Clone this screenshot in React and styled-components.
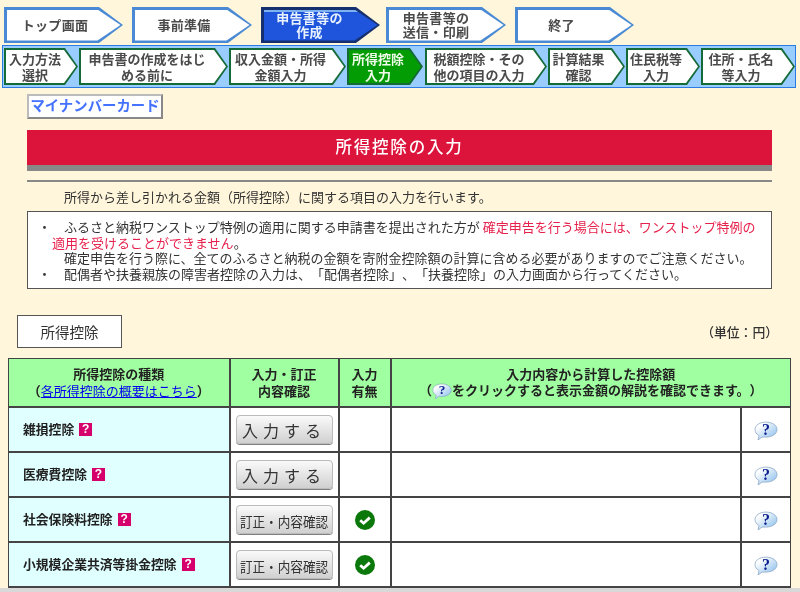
import React from 'react';
import styled, { createGlobalStyle, css } from 'styled-components';

const GlobalStyle = createGlobalStyle`
  html, body { margin: 0; padding: 0; height: 592px; overflow: hidden; background: #fff6db; }
  body {
    font-family: "Noto Sans CJK JP", "Liberation Sans", sans-serif;
    font-size: 13px;
    color: #333;
    text-spacing-trim: space-all;
    font-feature-settings: "palt" 0;
  }
`;

const topSteps = [
  { lines: ['トップ画面'], width: 119, gap: 9, pad: 17 },
  { lines: ['事前準備'], width: 120, gap: 9, pad: 16 },
  { lines: ['申告書等の', '作成'], width: 119, gap: 6, pad: 22, active: true },
  { lines: ['申告書等の', '送信・印刷'], width: 120, gap: 9, pad: 20 },
  { lines: ['終了'], width: 119, gap: 0, pad: 26 },
];

const subSteps = [
  { lines: ['入力方法', '選択'], width: 74, gap: 1, pad: 12 },
  { lines: ['申告書の作成をはじ', 'める前に'], width: 149, gap: 1, pad: 13 },
  { lines: ['収入金額・所得', '金額入力'], width: 117, gap: 1, pad: 14 },
  { lines: ['所得控除', '入力'], width: 76, gap: 2, pad: 14, active: true },
  { lines: ['税額控除・その', '他の項目の入力'], width: 122, gap: 1, pad: 14 },
  { lines: ['計算結果', '確認'], width: 77, gap: 1, pad: 16 },
  { lines: ['住民税等', '入力'], width: 74, gap: 1, pad: 14 },
  { lines: ['住所・氏名', '等入力'], width: 94, gap: 0, pad: 14 },
];

const rows = [
  { name: '雑損控除', done: false },
  { name: '医療費控除', done: false },
  { name: '社会保険料控除', done: true },
  { name: '小規模企業共済等掛金控除', done: true },
];

// the reference is a slightly scaled capture, everything in it is a little soft
const Page = styled.div`
  height: 592px;
  overflow: hidden;
  filter: blur(0.35px);
`;

const TopNav = styled.nav`
  display: flex;
  height: 36px;
  padding: 7px 0 2px 4px;
`;

const arrowShape = (tip) => `polygon(0 0, calc(100% - ${tip}px) 0, 100% 50%, calc(100% - ${tip}px) 100%, 0 100%)`;

const Step = styled.div`
  position: relative;
  isolation: isolate;
  flex: none;
  display: flex;
  align-items: center;
  justify-content: center;
  box-sizing: border-box;
  text-align: center;
  font-weight: 700;
  width: ${(p) => p.$width}px;
  margin-right: ${(p) => p.$gap}px;
  padding-right: ${(p) => p.$pad}px;
  &::before, &::after { content: ''; position: absolute; z-index: -1; }
  &::before { inset: 0; }
  &::after { inset: 2.5px; }
`;

const TopStep = styled(Step)`
  font-size: 13px;
  line-height: 14px;
  letter-spacing: 0.3px;
  color: ${(p) => (p.$active ? '#e8f2ff' : '#4a4a4a')};
  &::before {
    clip-path: ${arrowShape(24)};
    background: ${(p) => (p.$active ? '#15306e' : '#4a8ad4')};
  }
  &::after {
    clip-path: ${arrowShape(23)};
    ${(p) => (p.$active
      ? css`background: linear-gradient(#7fb2f0 0 2px, #1f55dc 2px 100%);`
      : css`background: #fff;`)}
  }
`;

const SubNav = styled.nav`
  display: flex;
  box-sizing: border-box;
  width: 794px;
  height: 43px;
  margin-left: 2px;
  padding: 2px 0 0 1px;
  background: #99ccff;
  border: 1px solid #2a7ae2;
`;

const SubStep = styled(Step)`
  height: 37px;
  font-size: 13px;
  line-height: 15.5px;
  color: ${(p) => (p.$active ? '#eefbe8' : '#4a4a4a')};
  &::before {
    clip-path: ${arrowShape(13)};
    background: #156b38;
  }
  &::after {
    inset: 2px;
    clip-path: ${arrowShape(12)};
    background: ${(p) => (p.$active ? '#049c04' : '#fff')};
  }
`;

const CardTag = styled.div`
  box-sizing: border-box;
  width: 136px;
  height: 25px;
  margin: 6px 0 0 27px;
  background: #fff;
  border: 2px solid #bbb;
  border-right-color: #888;
  border-bottom-color: #888;
  color: #4472ff;
  font-size: 14.4px;
  font-weight: 700;
  line-height: 18px;
  text-align: center;
  white-space: nowrap;
`;

const Main = styled.main`
  width: 745px;
  margin-left: 27px;
`;

const Title = styled.h1`
  height: 35px;
  margin: 11px 0 0;
  background: #dc143c;
  border-bottom: 6px solid #888;
  color: #fff;
  font-size: 16.5px;
  font-weight: 500;
  line-height: 32px;
  letter-spacing: 1.8px;
  text-align: center;
`;

const Rule = styled.hr`
  height: 2px;
  margin: 9px 0 0;
  border: 0;
  background: #888;
`;

const Lead = styled.p`
  margin: 5px 0 0;
  padding-left: 37px;
  line-height: 19px;
`;

const Notice = styled.div`
  box-sizing: border-box;
  height: 78px;
  margin-top: 5px;
  padding: 7px 0 0 16px;
  background: #fff;
  border: 1px solid #555;
  line-height: 15.6px;
  white-space: nowrap;
`;

const NoticeRow = styled.div`
  display: flex;
`;

const Bullet = styled.span`
  flex: none;
  width: 14px;
  margin-left: -6px;
`;

const NoticeText = styled.div`
  text-indent: 12px;
`;

const Alert = styled.span`
  color: #e6214c;
`;

const SectionBar = styled.div`
  display: flex;
  align-items: center;
  justify-content: space-between;
  width: 760px;
  height: 33px;
  margin: 26px 0 0 17px;
`;

const SectionTag = styled.div`
  box-sizing: border-box;
  width: 105px;
  height: 33px;
  background: #fff;
  border: 1px solid #555;
  font-size: 14.5px;
  line-height: 31px;
  text-align: center;
`;

const Unit = styled.div`
  margin-right: -1px;
  font-size: 12.8px;
  font-weight: 500;
`;

const Table = styled.table`
  width: 782px;
  height: 230px;
  margin: 10px 0 0 8px;
  border-collapse: collapse;
  table-layout: fixed;
  tr > :first-child { border-left-width: 1px; }
  tr > :last-child { border-right-width: 1px; }
  thead > tr > * { border-top-width: 1px; }
`;

const HeadCell = styled.th`
  height: 47px;
  padding: 0;
  background: #a0ffa0;
  border: 2px solid #444;
  font-size: 13px;
  font-weight: 700;
  line-height: 16.5px;
  color: #222;
`;

const Cell = styled.td`
  padding: 0;
  background: #fff;
  border: 2px solid #444;
  text-align: center;
  vertical-align: middle;
`;

const NameCell = styled(Cell)`
  padding-left: 14px;
  background: #e0ffff;
  color: #222;
  font-size: 12.8px;
  font-weight: 700;
  text-align: left;
  white-space: nowrap;
`;

const GuideLink = styled.a`
  color: #0000ee;
  font-weight: 400;
  text-decoration: underline;
`;

const HelpBadge = styled.span`
  display: inline-block;
  width: 13px;
  height: 13px;
  margin: 0 0 4px 5px;
  background: #d6006c;
  color: #fff;
  font-family: "Liberation Sans", sans-serif;
  font-size: 12px;
  font-weight: 700;
  line-height: 13px;
  text-align: center;
  vertical-align: middle;
`;

const ActionButton = styled.button`
  display: block;
  box-sizing: border-box;
  width: 97px;
  height: 29px;
  margin: 0 auto;
  padding: 0;
  background: linear-gradient(#fafafa, #d0d0d0);
  border: 1px solid #bbb;
  border-radius: 4px;
  box-shadow: 0 1px 0 #808080;
  color: #333;
  font-family: inherit;
  font-size: 16px;
  letter-spacing: 5px;
  white-space: nowrap;
`;

const NarrowLabel = styled.span`
  display: inline-block;
  margin: 0 -6px;
  font-size: 14px;
  letter-spacing: 0;
  transform: scaleX(0.9);
`;

const Strip = styled.div`
  height: 4px;
  background: #d8d8d8;
`;

function CheckMark() {
  return (
    <svg width="20" height="20" viewBox="0 0 20 20" style={{ display: 'block', margin: '0 auto' }}>
      <circle cx="10" cy="10" r="10" fill="#0a780a" />
      <path d="M5.2 10.2 L8.6 13.2 L14.8 7.6" fill="none" stroke="#fff" strokeWidth="2.8" />
    </svg>
  );
}

function HelpBubble({ size = 24, id }) {
  return (
    <svg width={size} height={size * 0.8} viewBox="0 0 24 19" style={{ verticalAlign: 'middle' }}>
      <defs>
        <linearGradient id={id} x1="0" y1="0" x2="1" y2="1">
          <stop offset="0.2" stopColor="#ffffff" />
          <stop offset="1" stopColor="#7fb8ea" />
        </linearGradient>
      </defs>
      <path d="M12 1 C18 1 23 4 23 8.5 C23 13 18 16 12 16 L8 16 L4 19 L5 14.5 C2.500 13 1 11 1 8.5 C1 4 6 1 12 1 Z" fill={`url(#${id})`} stroke="#7f9fc0" strokeWidth="0.7" />
      <text x="12" y="13.5" textAnchor="middle" fontFamily="Liberation Serif, serif" fontSize="16" fontWeight="700" fill="#0c1f8f">?</text>
    </svg>
  );
}

function StepLines({ lines }) {
  return <div>{lines.map((line, i) => <React.Fragment key={i}>{i > 0 && <br />}{line}</React.Fragment>)}</div>;
}

export default function App() {
  return (
    <Page>
      <GlobalStyle />
      <TopNav>
        {topSteps.map((s) => (
          <TopStep key={s.lines[0] + s.width} $width={s.width} $gap={s.gap} $pad={s.pad} $active={s.active}>
            <StepLines lines={s.lines} />
          </TopStep>
        ))}
      </TopNav>
      <SubNav>
        {subSteps.map((s) => (
          <SubStep key={s.lines[0]} $width={s.width} $gap={s.gap} $pad={s.pad} $active={s.active}>
            <StepLines lines={s.lines} />
          </SubStep>
        ))}
      </SubNav>
      <CardTag>マイナンバーカード</CardTag>
      <Main>
        <Title>所得控除の入力</Title>
        <Rule />
        <Lead>所得から差し引かれる金額（所得控除）に関する項目の入力を行います。</Lead>
        <Notice>
          <NoticeRow>
            <Bullet>・</Bullet>
            <NoticeText>
              ふるさと納税ワンストップ特例の適用に関する申請書を提出された方が <Alert>確定申告を行う場合には、ワンストップ特例の<br />適用を受けることができません</Alert>。
            </NoticeText>
          </NoticeRow>
          <NoticeRow>
            <Bullet />
            <NoticeText>確定申告を行う際に、全てのふるさと納税の金額を寄附金控除額の計算に含める必要がありますのでご注意ください。</NoticeText>
          </NoticeRow>
          <NoticeRow>
            <Bullet>・</Bullet>
            <NoticeText>配偶者や扶養親族の障害者控除の入力は、「配偶者控除」、「扶養控除」の入力画面から行ってください。</NoticeText>
          </NoticeRow>
        </Notice>
      </Main>
      <SectionBar>
        <SectionTag>所得控除</SectionTag>
        <Unit>（単位：円）</Unit>
      </SectionBar>
      <Table>
        <colgroup>
          <col style={{ width: 221 }} />
          <col style={{ width: 109 }} />
          <col style={{ width: 52 }} />
          <col style={{ width: 350 }} />
          <col style={{ width: 50 }} />
        </colgroup>
        <thead>
          <tr>
            <HeadCell>所得控除の種類<br />（<GuideLink href="#">各所得控除の概要はこちら</GuideLink>）</HeadCell>
            <HeadCell>入力・訂正<br />内容確認</HeadCell>
            <HeadCell>入力<br />有無</HeadCell>
            <HeadCell colSpan={2}>
              入力内容から計算した控除額<br />
              （<HelpBubble size={20} id="help-head" />をクリックすると表示金額の解説を確認できます。）
            </HeadCell>
          </tr>
        </thead>
        <tbody>
          {rows.map((row, i) => (
            <tr key={row.name}>
              <NameCell>{row.name}<HelpBadge>?</HelpBadge></NameCell>
              <Cell>
                <ActionButton>
                  {row.done ? <NarrowLabel>訂正・内容確認</NarrowLabel> : '入力する'}
                </ActionButton>
              </Cell>
              <Cell>{row.done && <CheckMark />}</Cell>
              <Cell />
              <Cell><HelpBubble id={`help-${i}`} /></Cell>
            </tr>
          ))}
        </tbody>
      </Table>
      <Strip />
    </Page>
  );
}
